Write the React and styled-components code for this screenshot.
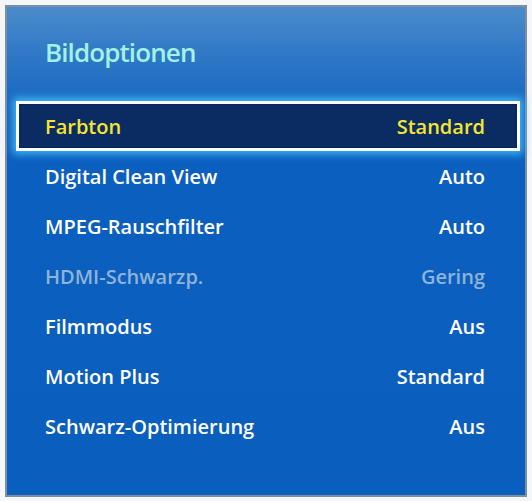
import React from "react";
import styled, { createGlobalStyle } from "styled-components";

const Global = createGlobalStyle`
  html, body { margin: 0; padding: 0; background: #f4f6f8; }
  body { font-family: "Open Sans", "Noto Sans", sans-serif; }
`;

const Panel = styled.div`
  box-sizing: border-box;
  margin: 5px;
  width: 522px;
  height: 492px;
  border: 2px solid #7d8ea3;
  background: linear-gradient(180deg, #4b8bcb 0%, #2f78c6 10%, #1464c0 22%, #0b5fbf 32%, #0a5ebd 100%);
  display: flex;
  flex-direction: column;
`;

const Title = styled.h1`
  margin: 0;
  height: 94px;
  box-sizing: border-box;
  padding: 27px 0 0 38px;
  font-size: 26px;
  font-weight: 600;
  color: #a2f2e4;
  letter-spacing: -0.9px;
`;

const List = styled.div`
  display: flex;
  flex-direction: column;
`;

const Row = styled.div`
  box-sizing: border-box;
  height: 50px;
  margin: 0 5px 0 9px;
  padding: 0 35px 0 29px;
  display: flex;
  align-items: center;
  justify-content: space-between;
  font-size: 20px;
  font-weight: 600;
  letter-spacing: 0;
  color: ${(p) => (p.$selected ? "#f5e532" : p.$disabled ? "#8fb3d9" : "#ffffff")};
  ${(p) =>
    p.$selected &&
    `
    background: #0a2c62;
    border: 3px solid #ffffff;
    padding: 0 32px 0 26px;
    box-shadow: 0 0 8px 3px rgba(70, 200, 255, 0.85), inset 0 0 2px rgba(0,0,0,0.4);
  `}
`;

const items = [
  ["Farbton", "Standard", true],
  ["Digital Clean View", "Auto"],
  ["MPEG-Rauschfilter", "Auto"],
  ["HDMI-Schwarzp.", "Gering", false, true],
  ["Filmmodus", "Aus"],
  ["Motion Plus", "Standard"],
  ["Schwarz-Optimierung", "Aus"],
];

export default function App() {
  return (
    <>
      <Global />
      <Panel>
        <Title>Bildoptionen</Title>
        <List>
          {items.map(([label, value, sel, dis]) => (
            <Row key={label} $selected={sel} $disabled={dis}>
              <span>{label}</span>
              <span>{value}</span>
            </Row>
          ))}
        </List>
      </Panel>
    </>
  );
}
